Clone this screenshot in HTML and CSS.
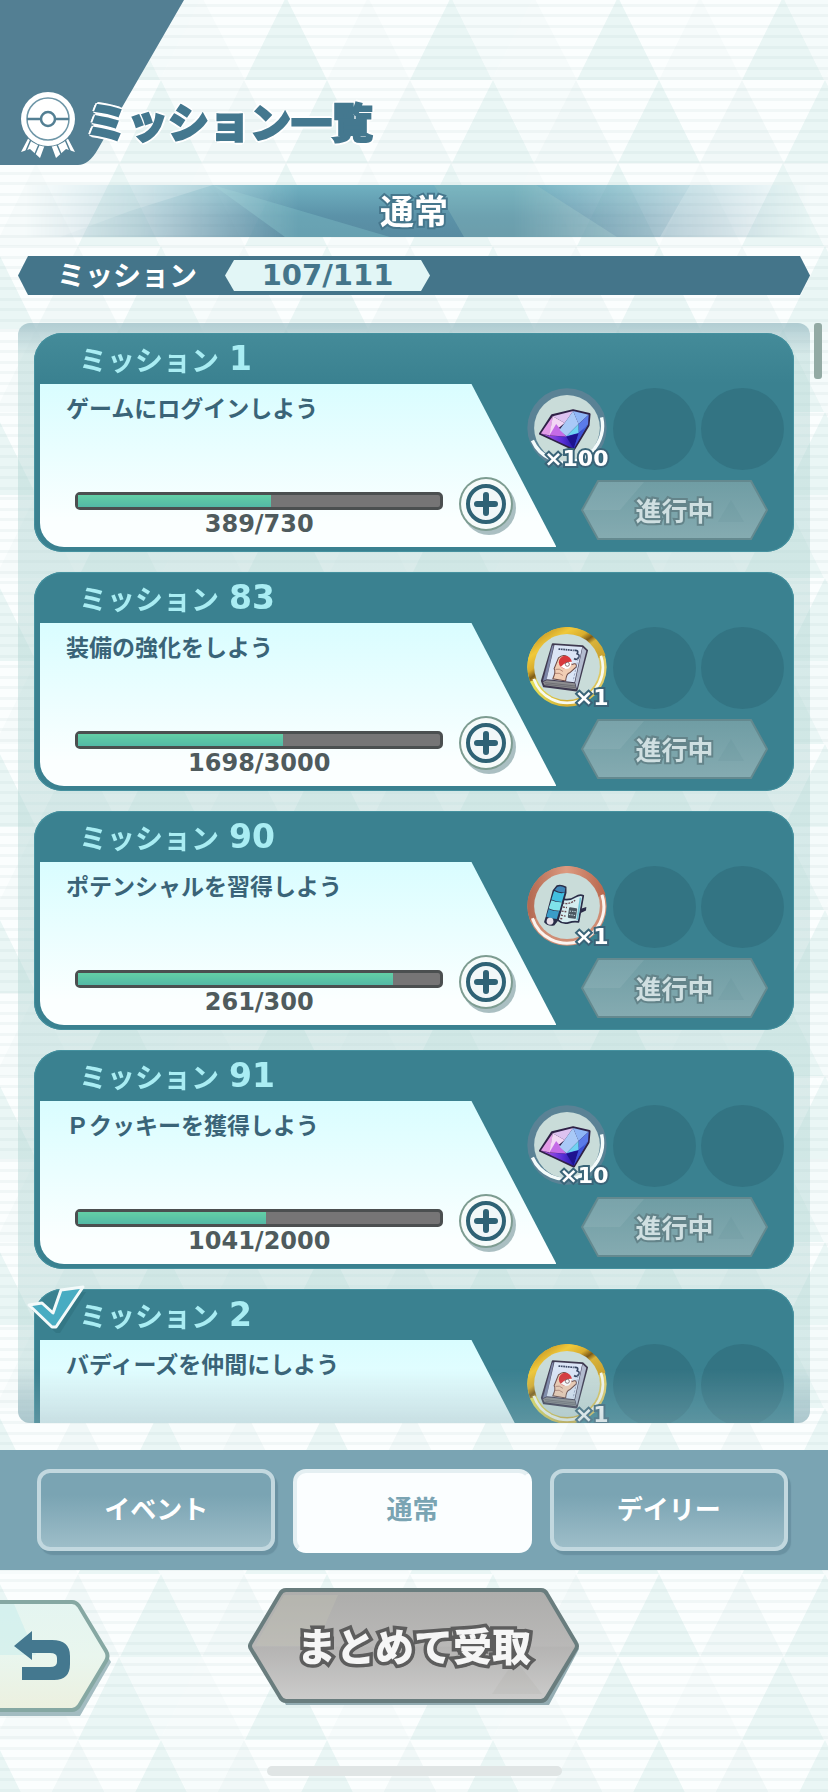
FILE: index.html
```html
<!DOCTYPE html>
<html lang="ja">
<head>
<meta charset="utf-8">
<meta name="viewport" content="width=device-width, initial-scale=1">
<title>ミッション一覧</title>
<link rel="stylesheet" href="styles.css">
</head>
<body>
<svg class="defs" width="0" height="0" aria-hidden="true">
  <defs>
    <linearGradient id="gold" x1="0" y1="0" x2="1" y2="1">
      <stop offset="0" stop-color="#a87a1c"/><stop offset=".12" stop-color="#c99a28"/><stop offset=".28" stop-color="#f0c93a"/><stop offset=".42" stop-color="#d9ad2e"/><stop offset=".5" stop-color="#7d5a17"/><stop offset=".56" stop-color="#d8b23a"/><stop offset="1" stop-color="#b98f25"/>
    </linearGradient>
    <linearGradient id="goldLow" x1="0" y1="0" x2="1" y2="0">
      <stop offset="0" stop-color="#e8e860"/><stop offset=".5" stop-color="#d2ab30"/><stop offset="1" stop-color="#e2cf6a"/>
    </linearGradient>
    <linearGradient id="copper" x1="0" y1="0" x2="1" y2="0">
      <stop offset="0" stop-color="#b46a52"/><stop offset=".5" stop-color="#dc9a80"/><stop offset="1" stop-color="#b9694f"/>
    </linearGradient>
    <linearGradient id="gemLow" x1="0" y1="0" x2="1" y2="0">
      <stop offset="0" stop-color="#c05ae8"/><stop offset=".45" stop-color="#5a2fd8"/><stop offset=".7" stop-color="#2419a8"/><stop offset="1" stop-color="#4a78e8"/>
    </linearGradient>
    <linearGradient id="hexGrey" x1="0" y1="0" x2="0" y2="1">
      <stop offset="0" stop-color="#adadab"/><stop offset=".5" stop-color="#b9b8b7"/><stop offset=".52" stop-color="#b5b4b3"/><stop offset="1" stop-color="#cccccb"/>
    </linearGradient>
    <linearGradient id="hexMint" x1="0" y1="0" x2="0" y2="1">
      <stop offset="0" stop-color="#e4f5f1"/><stop offset=".5" stop-color="#e9f6ee"/><stop offset="1" stop-color="#ecf0df"/>
    </linearGradient>
    <linearGradient id="hexTeal" x1="0" y1="0" x2="0" y2="1">
      <stop offset="0" stop-color="#6f9da4"/><stop offset="1" stop-color="#85abb1"/>
    </linearGradient>
    <linearGradient id="bandBase" x1="0" y1="0" x2="0" y2="1">
      <stop offset="0" stop-color="#70b1c1"/><stop offset=".6" stop-color="#5b92a8"/><stop offset="1" stop-color="#588ba1"/>
    </linearGradient>
  </defs>

  <symbol id="gem" viewBox="54 49 236 236">
    <circle cx="172" cy="167" r="117" fill="#5a8295"/>
    <circle cx="172" cy="167" r="97" fill="#c9dcd9"/>
    <path d="M70 204A108 108 0 0 0 274 136" fill="none" stroke="#f4fbfb" stroke-width="10"/>
    <g transform="translate(0 27)">
      <path d="M93 157L128 103L190 88L238 99L235 132L192 203Z" fill="#2f2146" stroke="#2f2146" stroke-width="7" stroke-linejoin="round"/>
      <path d="M95 156L192 201L234 130L222 138L165 165L120 163Z" fill="url(#gemLow)"/>
      <path d="M95 156L130 105L122 162Z" fill="#e39be8"/>
      <path d="M130 105L165 125L120 162Z" fill="#f3d7f5"/>
      <path d="M130 105L190 90L165 125Z" fill="#ddc2f0"/>
      <path d="M120 162L140 128L170 165Z" fill="#c56be6"/>
      <path d="M165 125L190 90L206 128L170 164L150 145Z" fill="#a9c9f7"/>
      <path d="M190 90L236 101L206 128Z" fill="#8fb6f6"/>
      <path d="M236 101L234 130L206 155L206 128Z" fill="#5b7be9"/>
      <path d="M206 128L206 155L170 164Z" fill="#6fd2f2"/>
      <path d="M170 166L192 201L206 156Z" fill="#1e128f"/>
      <path d="M206 156L192 201L225 142Z" fill="#3d4fd6"/>
    </g>
  </symbol>

  <symbol id="book" viewBox="54 49 236 236">
    <circle cx="172" cy="167" r="117" fill="url(#goldLow)"/>
    <path d="M66 204A112 112 0 1 1 280 130L262 136A95 95 0 1 0 82 199Z" fill="url(#gold)" stroke="url(#gold)" stroke-width="9"/>
    <circle cx="172" cy="167" r="97" fill="#c9dcd9"/>
    <path d="M74 202A104 104 0 0 0 272 134" fill="none" stroke="#f8faf0" stroke-width="8"/>
    <path d="M130 100L218 106L231 118L200 236L104 224L98 208Z" fill="#3f3a50" stroke="#3f3a50" stroke-width="6" stroke-linejoin="round"/>
    <path d="M133 103L112 204L101 208L128 104Z" fill="#7d86a8"/>
    <path d="M135 102L217 108L194 212L112 203Z" fill="#dbe5f6"/>
    <path d="M218 109L229 119L201 231L196 213Z" fill="#b3bbcf"/>
    <path d="M112 206L195 215L199 233L106 221L101 211Z" fill="#8d8d90"/>
    <path d="M106 213L196 223M108 218L197 228" stroke="#5f5f66" stroke-width="2"/>
    <path d="M147 114L192 118" stroke="#3e4a66" stroke-width="5" stroke-dasharray="5 2"/>
    <path d="M194 118Q208 117 202 128Q212 132 204 142Q199 147 193 142" fill="none" stroke="#33425e" stroke-width="5"/>
    <path d="M147 140Q160 128 172 136L186 160Q200 152 200 166L180 184Q170 186 168 208L130 202Q140 180 134 172Z" fill="#f1cdb4" stroke="#6c4a46" stroke-width="3"/>
    <circle cx="167" cy="153" r="19" fill="#d8383c"/>
    <path d="M154 166Q170 150 187 152Q184 174 167 173Z" fill="#fff"/>
    <circle cx="173" cy="159" r="6" fill="#fff" stroke="#5a3840" stroke-width="2"/>
    <path d="M138 174Q150 170 160 180M136 186Q150 182 160 192" fill="none" stroke="#9b6a5c" stroke-width="2"/>
    <path d="M207 132L190 208" stroke="#7f8cae" stroke-width="2" stroke-dasharray="7 4"/>
  </symbol>

  <symbol id="scroll" viewBox="54 49 236 236">
    <circle cx="172" cy="167" r="117" fill="#cf8d74"/>
    <path d="M66 204A112 112 0 1 1 280 130L262 136A95 95 0 1 0 82 199Z" fill="url(#copper)" stroke="url(#copper)" stroke-width="9"/>
    <circle cx="172" cy="167" r="97" fill="#c9dcd9"/>
    <path d="M70 203A106 106 0 0 0 275 134" fill="none" stroke="#fbf4f0" stroke-width="9"/>
    <path d="M204 178L229 170L228 180L208 190Z" fill="#2a2d48"/>
    <path d="M155 146Q180 152 197 140Q210 132 220 137L206 214Q190 212 178 216Q160 222 144 208Z" fill="#d5edf0" stroke="#2a2d48" stroke-width="5" stroke-linejoin="round"/>
    <path d="M212 142L202 208" stroke="#6fc4d6" stroke-width="5"/>
    <path d="M158 158Q178 164 196 150M160 170L172 172M156 182L170 184M154 194L168 197M152 204L160 205" fill="none" stroke="#6a4a50" stroke-width="4" stroke-dasharray="6 3"/>
    <rect x="176" y="172" width="24" height="32" rx="3" fill="#4b5761" transform="rotate(8 189 189)"/>
    <path d="M180 182L198 184M178 192L196 195" stroke="#c8dfe3" stroke-width="3" stroke-dasharray="4 3"/>
    <path d="M143 108Q154 104 168 112L168 128L146 206L133 222Q118 226 107 214L112 198L132 122Z" fill="#2a2d48" stroke="#2a2d48" stroke-width="5" stroke-linejoin="round"/>
    <path d="M143 111Q155 106 167 114L165 127Q148 128 136 120Z" fill="#3e86b8"/>
    <path d="M134 123Q150 132 165 128L157 155Q140 155 126 148Z" fill="#42bfe0"/>
    <path d="M126 150Q140 157 157 156L150 181Q130 181 118 174Z" fill="#7fe3ea"/>
    <path d="M118 176Q130 183 149 182L142 205Q122 205 111 198Z" fill="#3a9cc8"/>
    <circle cx="122" cy="212" r="10" fill="#e6dfe8"/>
  </symbol>

  <symbol id="plus" viewBox="0 0 60 60">
    <circle cx="31" cy="32" r="27" fill="#8fa9ad" opacity=".75"/>
    <circle cx="28" cy="28" r="27" fill="#7d9c91"/>
    <circle cx="28" cy="28" r="25" fill="#f6fbfa"/>
    <circle cx="28" cy="28" r="18" fill="#f1f7f8" stroke="#2f6275" stroke-width="4"/>
    <path d="M28 19V37M19 28H37" stroke="#2f6275" stroke-width="6" stroke-linecap="round"/>
  </symbol>

  <symbol id="hexSmall" viewBox="0 0 187 60" preserveAspectRatio="none">
    <path d="M17 1H170L186 30L170 59H17L1 30Z" fill="url(#hexTeal)" stroke="#64898f" stroke-width="2"/>
    <path d="M18 2H63L39 30H3Z" fill="#fff" opacity=".07"/>
    <path d="M150 20L163 42H137Z" fill="#3d7480" opacity=".08"/>
  </symbol>
</svg>

<svg class="backdrop" aria-hidden="true">
  <defs>
    <pattern id="tri" width="332" height="166" patternUnits="userSpaceOnUse" patternTransform="translate(-46 -3)">
      <g fill="#e4f3f2">
        <path d="M0 83L0 0L41 83Z"/>
        <path d="M124 83L165 0L206 83Z"/>
        <path d="M291 83L332 0V83Z"/>
        <path d="M0 166L41 83L82 166Z"/>
        <path d="M166 166L207 83L248 166Z"/>
      </g>
      <g fill="#eef6f6">
        <path d="M41 83L82 0L124 83Z" opacity=".5"/>
        <path d="M206 83L248 0L291 83Z" opacity=".5"/>
        <path d="M165 0H248L206 83Z" opacity=".6"/>
        <path d="M82 166L124 83L166 166Z"/>
        <path d="M248 166L290 83L332 166Z"/>
        <path d="M207 83H290L248 166Z" opacity=".3"/>
      </g>
    </pattern>
    <pattern id="lines" width="20" height="21" patternUnits="userSpaceOnUse">
      <rect y="4" width="20" height="3" fill="#7aa3a6" opacity=".08"/>
      <rect y="14" width="20" height="3" fill="#7aa3a6" opacity=".08"/>
    </pattern>
  </defs>
  <rect width="100%" height="100%" fill="#fbfefe"/>
  <rect width="100%" height="100%" fill="url(#tri)" opacity=".75"/>
  <rect width="100%" height="100%" fill="url(#lines)"/>
</svg>

<div class="app">
  <header class="top">
    <svg class="corner" viewBox="0 0 184 165" aria-hidden="true"><path d="M0 0H184L98 149Q89 165 78 165H0Z" fill="#537f93"/></svg>
    <svg class="badge" viewBox="0 0 56 68" aria-hidden="true">
      <path d="M11 42L1 61L10 58L20 67L27 48Z" fill="#fff"/>
      <path d="M45 42L55 61L46 58L36 67L29 48Z" fill="#fff"/>
      <path d="M12 46L6 60M21 49L15 63M44 46L50 60M35 49L41 63" stroke="#537f93" stroke-width="1.5"/>
      <circle cx="28" cy="28" r="28" fill="#537f93"/>
      <circle cx="28" cy="28" r="27" fill="#fff"/>
      <circle cx="28" cy="28" r="21" fill="none" stroke="#6f97a8" stroke-width="1.5"/>
      <path d="M7 28H49" stroke="#537f93" stroke-width="2.5"/>
      <circle cx="28" cy="28" r="7" fill="#fff" stroke="#537f93" stroke-width="2.5"/>
    </svg>
    <h1 class="title">ミッション一覧</h1>
  </header>

  <div class="band">
    <svg class="band-art" viewBox="0 0 828 52" preserveAspectRatio="none" aria-hidden="true">
      <rect width="828" height="52" fill="url(#bandBase)"/>
      <path d="M0 0H213L130 26L60 52H0Z" fill="#fff" opacity=".2"/>
      <path d="M213 0L390 52H285Z" fill="#7fc0c8" opacity=".4"/>
      <path d="M434 0H536L617 52H464Z" fill="#8fc0bf" opacity=".35"/>
      <path d="M690 0L660 52H828V0Z" fill="#fff" opacity=".2"/>
    </svg>
    <h2 class="band-text">通常</h2>
  </div>

  <div class="summary">
    <span class="summary-label">ミッション</span>
    <span class="summary-count">107/111</span>
  </div>

  <main class="panel">
    <div class="list">
      <article class="card">
        <h3 class="card-title">ミッション<span class="num">1</span></h3>
        <div class="card-row">
          <div class="card-body">
            <p class="desc">ゲームにログインしよう</p>
            <div class="progress">
              <div class="meter"><div class="track"><div class="fill" style="width:53.3%"></div></div><span class="count">389/730</span></div>
              <button class="plus" type="button" aria-label="詳細"><svg><use href="#plus"/></svg></button>
            </div>
          </div>
          <div class="side">
            <div class="rewards"><div class="item"><svg><use href="#gem"/></svg><span class="qty">×100</span></div><div class="slot"></div><div class="slot"></div></div>
            <button class="state" type="button"><svg><use href="#hexSmall"/></svg><span>進行中</span></button>
          </div>
        </div>
      </article>

      <article class="card">
        <h3 class="card-title">ミッション<span class="num">83</span></h3>
        <div class="card-row">
          <div class="card-body">
            <p class="desc">装備の強化をしよう</p>
            <div class="progress">
              <div class="meter"><div class="track"><div class="fill" style="width:56.6%"></div></div><span class="count">1698/3000</span></div>
              <button class="plus" type="button" aria-label="詳細"><svg><use href="#plus"/></svg></button>
            </div>
          </div>
          <div class="side">
            <div class="rewards"><div class="item"><svg><use href="#book"/></svg><span class="qty">×1</span></div><div class="slot"></div><div class="slot"></div></div>
            <button class="state" type="button"><svg><use href="#hexSmall"/></svg><span>進行中</span></button>
          </div>
        </div>
      </article>

      <article class="card">
        <h3 class="card-title">ミッション<span class="num">90</span></h3>
        <div class="card-row">
          <div class="card-body">
            <p class="desc">ポテンシャルを習得しよう</p>
            <div class="progress">
              <div class="meter"><div class="track"><div class="fill" style="width:87%"></div></div><span class="count">261/300</span></div>
              <button class="plus" type="button" aria-label="詳細"><svg><use href="#plus"/></svg></button>
            </div>
          </div>
          <div class="side">
            <div class="rewards"><div class="item"><svg><use href="#scroll"/></svg><span class="qty">×1</span></div><div class="slot"></div><div class="slot"></div></div>
            <button class="state" type="button"><svg><use href="#hexSmall"/></svg><span>進行中</span></button>
          </div>
        </div>
      </article>

      <article class="card">
        <h3 class="card-title">ミッション<span class="num">91</span></h3>
        <div class="card-row">
          <div class="card-body">
            <p class="desc">Ｐクッキーを獲得しよう</p>
            <div class="progress">
              <div class="meter"><div class="track"><div class="fill" style="width:52%"></div></div><span class="count">1041/2000</span></div>
              <button class="plus" type="button" aria-label="詳細"><svg><use href="#plus"/></svg></button>
            </div>
          </div>
          <div class="side">
            <div class="rewards"><div class="item"><svg><use href="#gem"/></svg><span class="qty">×10</span></div><div class="slot"></div><div class="slot"></div></div>
            <button class="state" type="button"><svg><use href="#hexSmall"/></svg><span>進行中</span></button>
          </div>
        </div>
      </article>

      <article class="card">
        <svg class="check" viewBox="0 0 62 48" aria-label="達成">
          <path d="M4 22L17 20L28 30L36 6L58 4L32 45H28Z" fill="#2d6a78" opacity=".45" transform="translate(2 3)"/>
          <path d="M3 20L16 18L27 28L35 5L57 2L30 42H26Z" fill="#48acc2" stroke="#f3fafa" stroke-width="3" stroke-linejoin="round"/>
        </svg>
        <h3 class="card-title">ミッション<span class="num">2</span></h3>
        <div class="card-row">
          <div class="card-body">
            <p class="desc">バディーズを仲間にしよう</p>
          </div>
          <div class="side">
            <div class="rewards"><div class="item"><svg><use href="#book"/></svg><span class="qty">×1</span></div><div class="slot"></div><div class="slot"></div></div>
          </div>
        </div>
      </article>
    </div>
    <div class="scroll-thumb"></div>
  </main>

  <nav class="tabs">
    <button class="tab" type="button">イベント</button>
    <button class="tab active" type="button" aria-current="page">通常</button>
    <button class="tab" type="button">デイリー</button>
  </nav>

  <footer class="bottom">
    <button class="back" type="button" aria-label="戻る">
      <svg viewBox="0 0 112 118">
        <path d="M0 8H79L111 62L80 116H0Z" fill="#a3bcc1"/>
        <path d="M-6 2H72Q76 2 79 6L106 51Q109 56 106 61L79 106Q76 110 72 110H-6Z" fill="url(#hexMint)" stroke="#86a8a3" stroke-width="4"/>
        <path d="M0 4H14L36 55H0Z" fill="#bfeaec" opacity=".4"/>
        <path d="M14 46L32 31V40H52Q70 40 70 56V64Q70 80 54 80H22V67H50Q57 67 57 62V58Q57 53 50 53H32V60Z" fill="#44788f"/>
      </svg>
    </button>
    <button class="claim" type="button">
      <svg viewBox="0 0 332 120" preserveAspectRatio="none" aria-hidden="true">
        <path d="M38 6H300L331 61L301 117H38L6 61Z" fill="#94adb3"/>
        <path d="M38 2H293Q297 2 299 6L328 55Q330 58 328 61L299 109Q297 113 293 113H38Q34 113 32 109L3 61Q1 58 3 55L32 6Q34 2 38 2Z" fill="url(#hexGrey)" stroke="#697d7e" stroke-width="4"/>
        <path d="M36 7H90L68 58H7Z" fill="#c4c3b4" opacity=".35"/>
        <path d="M260 82L244 106H294L272 78Z" fill="#9a9a98" opacity=".12"/>
      </svg>
      <span>まとめて受取</span>
    </button>
    <div class="home-bar"></div>
  </footer>
</div>
</body>
</html>
```

FILE: styles.css
```css
* { box-sizing: border-box; }

body {
  margin: 0;
  font-family: "Noto Sans CJK JP", sans-serif;
  font-weight: 700;
  color: #3a6478;
}

h1, h2, h3, p { margin: 0; }

button {
  margin: 0;
  padding: 0;
  border: 0;
  background: none;
  font: inherit;
  color: inherit;
  cursor: pointer;
}

.defs { position: absolute; }

.backdrop {
  position: fixed;
  inset: 0;
  width: 100%;
  height: 100%;
  z-index: -1;
}

.app {
  display: flex;
  flex-direction: column;
  height: 100vh;
}

/* Header */
.top {
  position: relative;
  display: flex;
  align-items: flex-end;
  gap: 10px;
  height: 165px;
  padding: 0 20px 6px;
}

.corner {
  position: absolute;
  top: 0;
  left: 0;
  width: 184px;
  height: 165px;
}

.badge {
  position: relative;
  width: 56px;
  height: 68px;
}

.title {
  position: relative;
  font-size: 41px;
  font-weight: 900;
  line-height: 48px;
  padding-bottom: 15px;
  color: #44788f;
  -webkit-text-stroke: 2px #44788f;
  text-shadow: 3px 0 #fff, -3px 0 #fff, 0 3px #fff, 0 -3px #fff, 2px 2px #fff, -2px 2px #fff, 2px -2px #fff, -2px -2px #fff;
}

.band {
  position: relative;
  height: 52px;
  margin-top: 20px;
}

.band-art {
  position: absolute;
  inset: 0;
  width: 100%;
  height: 100%;
  mask-image: linear-gradient(90deg, transparent 3%, rgba(0, 0, 0, .35) 17%, #000 36%, #000 62%, rgba(0, 0, 0, .5) 80%, transparent 98%);
}

.band-text {
  position: relative;
  font-size: 34px;
  line-height: 50px;
  text-align: center;
  color: #fff;
  -webkit-text-stroke: 4px #46778d;
  paint-order: stroke fill;
}

.summary {
  display: flex;
  align-items: center;
  gap: 28px;
  height: 39px;
  margin: 19px 18px 0;
  padding-left: 39px;
  background: #44758a;
  clip-path: polygon(10px 0, calc(100% - 10px) 0, 100% 50%, calc(100% - 10px) 100%, 10px 100%, 0 50%);
}

.summary-label {
  font-size: 28px;
  line-height: 36px;
  padding-bottom: 3px;
  color: #fff;
}

.summary-count {
  width: 205px;
  font-family: "DejaVu Sans", sans-serif;
  font-size: 29px;
  line-height: 31px;
  text-align: center;
  color: #44758a;
  background: #e2f6f6;
  clip-path: polygon(9px 0, calc(100% - 9px) 0, 100% 50%, calc(100% - 9px) 100%, 9px 100%, 0 50%);
}

/* Mission list */
.panel {
  position: relative;
  flex: 1;
  min-height: 0;
  margin: 28px 18px 0;
  border-radius: 12px;
  background: linear-gradient(rgba(150, 186, 194, .7), rgba(178, 213, 211, .45) 32px, rgba(178, 213, 211, .45) calc(100% - 60px), rgba(150, 186, 194, .6));
}

.panel::after {
  content: "";
  position: absolute;
  inset: auto 0 0;
  height: 54px;
  border-radius: 0 0 12px 12px;
  background: linear-gradient(rgba(144, 178, 186, 0), rgba(144, 178, 186, .4));
  pointer-events: none;
}

.list {
  display: flex;
  flex-direction: column;
  gap: 20px;
  height: 100%;
  padding: 10px 16px;
  overflow-y: auto;
  scrollbar-width: none;
}

.scroll-thumb {
  position: absolute;
  top: 0;
  right: -12px;
  width: 8px;
  height: 56px;
  border-radius: 3px;
  background: #93aaa4;
}

.card {
  position: relative;
  flex: none;
  min-height: 219px;
  padding: 0 0 5px 6px;
  border-radius: 28px;
  background: #3a8190;
  box-shadow: inset 0 0 0 1px #45919f;
}

.card:first-child { background: linear-gradient(#448b99, #3a8190 50px); }

.card-title {
  display: flex;
  align-items: center;
  gap: 10px;
  height: 51px;
  padding-left: 39px;
  font-size: 28px;
  line-height: 50px;
  color: #a9edf3;
}

.num {
  font-family: "DejaVu Sans", sans-serif;
  font-size: 33px;
}

.card-row { display: flex; }

.card-body {
  display: flex;
  flex-direction: column;
  justify-content: space-between;
  flex: none;
  width: 68.5%;
  min-height: 163px;
  padding: 4px 43px 9px 26px;
  border-bottom-left-radius: 24px;
  background: linear-gradient(#d9fdff, #fbffff 85%);
  clip-path: polygon(0 0, calc(100% - 85px) 0, 100% 100%, 0 100%);
}

.desc {
  font-size: 23px;
  line-height: 38px;
}

.progress {
  display: flex;
  gap: 15px;
  padding-left: 9px;
}

.meter {
  flex: 1;
  padding-top: 16px;
  text-align: center;
}

.track {
  height: 18px;
  border: 3px solid #4b4f50;
  border-radius: 5px;
  background: #767576;
}

.fill {
  height: 100%;
  background: linear-gradient(#63cfa6, #53b9a6);
}

.count {
  display: block;
  font-family: "DejaVu Sans", sans-serif;
  font-size: 24px;
  line-height: 28px;
  color: #4f5b5d;
}

.plus {
  width: 55px;
  height: 60px;
}

.plus svg {
  display: block;
  width: 60px;
  height: 60px;
}

.side {
  position: relative;
  flex: 1;
  margin-left: -29px;
  padding: 4px 10px 0 0;
}

.rewards {
  display: flex;
  gap: 5px;
}

.item {
  position: relative;
  flex: none;
  width: 81px;
  height: 82px;
}

.item svg {
  display: block;
  width: 80px;
  height: 80px;
}

.qty {
  position: absolute;
  right: 0;
  bottom: -1px;
  font-family: "DejaVu Sans", sans-serif;
  font-size: 22px;
  line-height: 24px;
  color: #fff;
  -webkit-text-stroke: 4px #3a6478;
  paint-order: stroke fill;
}

.slot {
  flex: 1;
  height: 82px;
  border-radius: 50%;
  background: #337483;
}

.state {
  position: relative;
  display: block;
  width: 187px;
  height: 60px;
  margin: 10px 16px 0 auto;
}

.state svg {
  position: absolute;
  inset: 0;
  width: 100%;
  height: 100%;
}

.state span {
  position: relative;
  font-size: 26px;
  line-height: 58px;
  color: #cfdfe1;
  -webkit-text-stroke: 4px #64848a;
  paint-order: stroke fill;
}

.check {
  position: absolute;
  top: -4px;
  left: -8px;
  width: 62px;
  height: 48px;
}

/* Category tabs */
.tabs {
  display: grid;
  grid-template-columns: repeat(3, 1fr);
  gap: 18px;
  height: 120px;
  margin-top: 27px;
  padding: 19px 40px 18px 37px;
  background: #7aa4b3;
}

.tab {
  height: 82px;
  padding-bottom: 6px;
  border: 4px solid #c2d8df;
  border-radius: 13px;
  background: linear-gradient(#7aa4b3 30%, #9dbdc8);
  box-shadow: 3px 4px 1px #6a92a2;
  font-size: 26px;
  color: #fff;
}

.tab.active {
  height: 84px;
  padding-bottom: 8px;
  border-color: #e4eff2 #fbfeff #fbfeff #e4eff2;
  background: #fbfeff;
  box-shadow: none;
  color: #7aa4b3;
}

/* Bottom actions */
.bottom {
  display: grid;
  grid-template-columns: 1fr 332px 1fr;
  grid-template-rows: auto 1fr;
  justify-items: start;
  align-items: start;
  height: 222px;
  padding: 18px 0 16px;
}

.back { margin-top: 12px; }

.back svg {
  display: block;
  width: 112px;
  height: 118px;
}

.claim {
  position: relative;
  width: 100%;
  height: 120px;
  padding-bottom: 8px;
}

.claim svg {
  position: absolute;
  inset: 0;
  width: 100%;
  height: 100%;
}

.claim span {
  position: relative;
  font-size: 39px;
  font-weight: 900;
  line-height: 104px;
  color: #f6f6f6;
  -webkit-text-stroke: 7px #5d5d5d;
  paint-order: stroke fill;
  text-shadow: 1px 3px 0 #5d5d5d;
}

.home-bar {
  grid-column: 1 / -1;
  align-self: end;
  justify-self: center;
  width: 295px;
  height: 10px;
  border-radius: 5px;
  background: #e0e5e5;
}
```
